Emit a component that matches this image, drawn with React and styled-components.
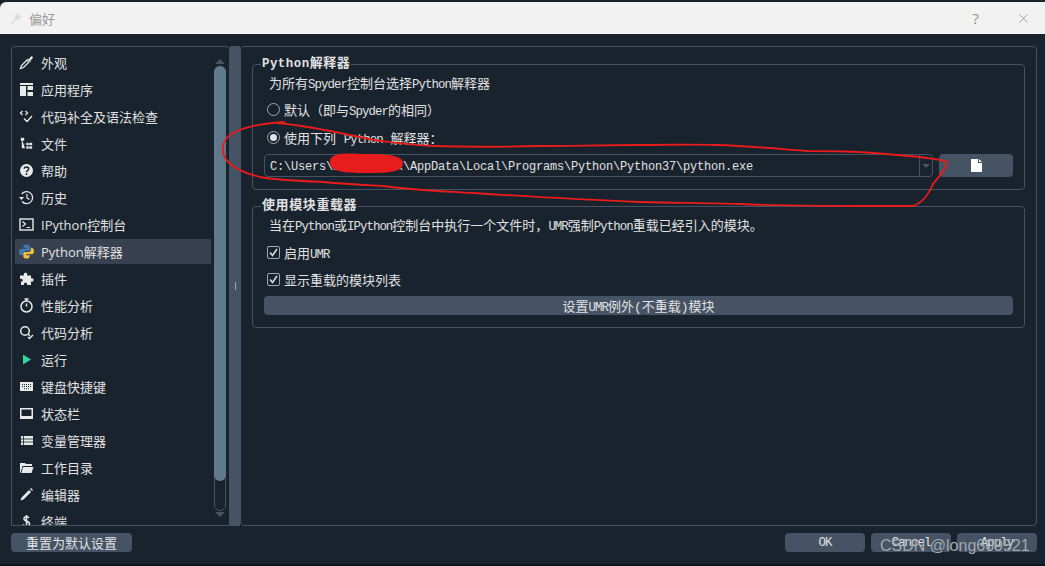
import React from "react";
import styled, { createGlobalStyle } from "styled-components";
import { X } from "lucide-react";

const Global = createGlobalStyle`
  html, body { margin: 0; padding: 0; background: #19232d; overflow: hidden; }
  * { box-sizing: border-box; }
`;

const SANS = `"Open Sans", "Noto Sans CJK SC", sans-serif`;
const MONO = `"Liberation Mono", "Noto Sans CJK SC", monospace`;

const Page = styled.div`
  position: relative;
  width: 1045px;
  height: 566px;
  overflow: hidden;
  background: #19232d;
  color: #e0e1e3;
  font-family: ${MONO};
  font-size: 13px;
  padding-top: 2px;
`;

const TitleBar = styled.div`
  height: 32px;
  background: #f2f2f2;
  border-top-left-radius: 6px;
  display: flex;
  align-items: center;
  padding: 0 14px 0 9px;
  color: #9a9a9a;
  font-family: ${SANS};
  font-size: 13px;
`;

const TitleText = styled.span`
  margin-left: 7px;
  flex: 1;
`;

const Help = styled.span`
  font-size: 15px;
  color: #8f8f8f;
  margin-right: 37px;
`;

const Main = styled.div`
  display: flex;
  height: 480px;
  margin: 12px 8px 0 11px;
`;

const ListBox = styled.div`
  position: relative;
  width: 219px;
  border: 1px solid #455364;
  border-radius: 4px 4px 0 0;
  overflow: hidden;
  padding: 2px 3px 0;
`;

const Item = styled.div`
  display: flex;
  align-items: center;
  height: 27px;
  margin-right: 15px;
  padding-left: 4px;
  gap: 7px;
  font-family: ${SANS};
  font-size: 13px;
  background: ${(p) =>
    p.$active ? "linear-gradient(transparent 1px, #37414f 1px, #37414f 26px, transparent 26px)" : "transparent"};
`;

const IconSlot = styled.span`
  width: 15px;
  height: 15px;
  display: flex;
  align-items: center;
  justify-content: center;
  flex: none;
`;

const ScrollBar = styled.div`
  position: absolute;
  top: 19px;
  right: 3px;
  width: 12px;
  height: 445px;
  border: 1px solid #455364;
  border-radius: 6px;
`;

const Thumb = styled.div`
  height: 415px;
  margin: -1px;
  background: #60798b;
  border-radius: 6px;
`;

const Arrow = styled.div`
  position: absolute;
  right: 4px;
  top: ${(p) => p.$top}px;
  width: 0;
  height: 0;
  border-left: 5px solid transparent;
  border-right: 5px solid transparent;
  ${(p) => (p.$up ? "border-bottom: 5px solid #455364;" : "border-top: 5px solid #455364;")}
`;

const Splitter = styled.div`
  width: 10px;
  background: #455364;
  display: flex;
  align-items: center;
  justify-content: center;
`;

const Grip = styled.div`
  width: 1px;
  height: 8px;
  background: #9da9b5;
`;

const Panel = styled.div`
  flex: 1;
  border: 1px solid #455364;
  border-radius: 4px;
  padding: 17px 11px 0;
`;

const Group = styled.div`
  position: relative;
  height: ${(p) => p.$h}px;
  margin-bottom: 16px;
  border: 1px solid #455364;
  border-radius: 4px;
  padding: 12px 11px 0;
`;

const Legend = styled.div`
  position: absolute;
  top: -9px;
  left: 8px;
  padding: 0 1px;
  background: #19232d;
  font-weight: bold;
  line-height: 15px;
  letter-spacing: 0.6px;
`;

const Line = styled.div`
  height: ${(p) => p.$h || 27}px;
  display: flex;
  align-items: center;
  gap: 4px;
  white-space: pre;
`;

const Note = styled.div`
  height: ${(p) => p.$h || 16}px;
  line-height: 16px;
  margin-left: 5px;
  white-space: pre;
`;

const Lat = styled.span`
  font-size: 12.4px;
  letter-spacing: -0.95px;
`;

const LegendLat = styled.span`
  font-size: 12.4px;
  letter-spacing: 0.5px;
`;

const Radio = styled.span`
  width: 13px;
  height: 13px;
  margin-left: 3px;
  border: 1px solid #9da9b5;
  border-radius: 50%;
  display: flex;
  align-items: center;
  justify-content: center;
  &::after {
    content: "";
    width: 7px;
    height: 7px;
    border-radius: 50%;
    background: ${(p) => (p.$on ? "#e0e1e3" : "transparent")};
  }
`;

const Check = styled.span`
  width: 13px;
  height: 13px;
  margin-left: 3px;
  border: 1px solid #9da9b5;
  border-radius: 2px;
  display: flex;
`;

const PathRow = styled.div`
  display: flex;
  gap: 6px;
  margin-top: 5px;
`;

const PathBox = styled.div`
  flex: 1;
  height: 23px;
  display: flex;
  align-items: center;
  justify-content: space-between;
  border: 1px solid #455364;
  border-radius: 4px;
  padding-left: 5px;
`;

const PathText = styled.span`
  font-size: 12px;
  letter-spacing: -0.2px;
  padding-top: 3px;
`;

const ComboDrop = styled.span`
  width: 13px;
  height: 100%;
  border-left: 1px solid #455364;
  display: flex;
  align-items: center;
  justify-content: center;
  &::after {
    content: "";
    border-left: 4px solid transparent;
    border-right: 4px solid transparent;
    border-top: 4px solid #455364;
  }
`;

const Button = styled.div`
  width: ${(p) => p.$w || "100%"};
  height: ${(p) => p.$h || 19}px;
  margin-top: ${(p) => p.$mt || 0}px;
  background: #455364;
  border-radius: 4px;
  display: flex;
  align-items: center;
  justify-content: center;
  white-space: pre;
  flex: none;
`;

const Footer = styled.div`
  display: flex;
  align-items: center;
  gap: 6px;
  margin: 7px 8px 0 11px;
`;

const Spacer = styled.div`
  flex: 1;
`;

const Watermark = styled.div`
  position: absolute;
  left: 880px;
  top: 537px;
  font-family: "Liberation Sans", sans-serif;
  font-size: 16px;
  line-height: 18px;
  color: #a3a9ae;
`;

const Strip = styled.div`
  position: absolute;
  left: 0;
  right: 0;
  bottom: 0;
  height: 2px;
  background: #101418;
`;

const Ink = styled.svg`
  position: absolute;
  left: 0;
  top: 0;
  pointer-events: none;
`;

const W = "#e8eaec";

const Svg = ({ children }) => (
  <svg width="15" height="15" viewBox="0 0 15 15">{children}</svg>
);

const navIcons = [
  <Svg><path d="M1.500 13.500 L2.500 10.500 L8 5 L10 7 L4.500 12.500 Z" fill="none" stroke={W} strokeWidth="1.300" /><path d="M8 3.500 L10 4 L12 1.500 C13 1 14.500 2 13.500 3.500 L11.500 5.500 L12 7.500 Z" fill={W} /></Svg>,
  <Svg><path d="M1 1 H14 V3 H1 Z M1 4 H7 V14 H1 Z M8.500 4 H14 V8 H8.500 Z M8.500 10 H14 V14 H8.500 Z" fill={W} /></Svg>,
  <Svg><path d="M3.500 2 L1.500 4 L3.500 6 M6.500 2 L8.500 4 L6.500 6 M5 9.500 L8 12.500 L13 7" fill="none" stroke={W} strokeWidth="1.300" /></Svg>,
  <Svg><path d="M2 2 H5 V4.500 H2 Z M3 4 V12 H6 M3 8 H6 M7.500 7 H9.500 V9 H7.500 Z M10.500 7 H13 V9 H10.500 Z M7.500 10.500 H9.500 V12.500 H7.500 Z M10.500 10.500 H13 V12.500 H10.500 Z" fill={W} stroke={W} strokeWidth="0.400" /></Svg>,
  <Svg><circle cx="7.500" cy="7.500" r="6.500" fill={W} /><path d="M5.300 5.800 C5.300 3.500 9.700 3.500 9.700 5.800 C9.700 7.400 7.500 7.200 7.500 9.200 M7.500 10.300 V12" fill="none" stroke="#19232d" strokeWidth="1.500" /></Svg>,
  <Svg><path d="M2.800 4 A6 6 0 1 1 3 11.500" fill="none" stroke={W} strokeWidth="1.300" /><path d="M0 7 L5 7 L2.500 10 Z" fill={W} /><path d="M8 4 V8 L10.500 9.500" fill="none" stroke={W} strokeWidth="1.200" /></Svg>,
  <Svg><rect x="1" y="2" width="13" height="11" fill="none" stroke={W} strokeWidth="1.400" /><path d="M3.500 4.500 L6.500 7 L3.500 9.500 M7.500 10.500 H11" fill="none" stroke={W} strokeWidth="1.200" /></Svg>,
  <Svg><path d="M7.500 0.500 C4.300 0.500 4.300 2 4.300 3.800 H7.800 V4.800 H2.500 C0.500 4.800 0 6.300 0 8 C0 10 1 11.300 2.800 11.300 H4 V9.300 C4 8 5 7 6.300 7 H9.500 C10.500 7 11 6.300 11 5.500 V2.800 C11 1.300 9.500 0.500 7.500 0.500 Z" fill="#3d7bb0" /><path d="M7.500 14.500 C10.700 14.500 10.700 13 10.700 11.200 H7.200 V10.200 H12.500 C14.500 10.200 15 8.700 15 7 C15 5 14 3.700 12.200 3.700 H11.800 V5.700 C11.800 7 10.800 8 9.500 8 H5.800 C4.800 8 4.300 8.700 4.300 9.500 V12.200 C4.300 13.700 5.500 14.500 7.500 14.500 Z" fill="#f0c040" /></Svg>,
  <Svg><path d="M1 4.500 H5 C3.500 1 9.500 0.500 8 4.500 H12 V7.500 C15.500 6.500 15.500 11.500 12 10.500 V14 H8 C9 11 4 11 5 14 H2 V10.500 C4.500 11 4.500 7 1 8 Z" fill={W} /></Svg>,
  <Svg><circle cx="7.500" cy="8.500" r="5.500" fill="none" stroke={W} strokeWidth="1.500" /><path d="M5.500 1 H9.500 M7.500 1 V3 M7.500 5.500 V8.500" fill="none" stroke={W} strokeWidth="1.400" /></Svg>,
  <Svg><circle cx="6" cy="6" r="4.300" fill="none" stroke={W} strokeWidth="1.500" /><path d="M9 9 L11 11 M9 12 L10.500 13.500 L14 10" fill="none" stroke={W} strokeWidth="1.300" /></Svg>,
  <Svg><path d="M4 2.500 L12 7.500 L4 12.500 Z" fill="#2fd6a0" /></Svg>,
  <Svg><path d="M1 3 H14 V12 H1 Z" fill={W} /><path d="M3 5.500 H12 M3 7.500 H12 M5 9.700 H10" stroke="#19232d" strokeWidth="1" strokeDasharray="1 1" /></Svg>,
  <Svg><path d="M1 2 H14 V13 H1 Z" fill={W} /><rect x="2.500" y="3.500" width="10" height="6.500" fill="#19232d" /></Svg>,
  <Svg><path d="M2 3 H14 V12 H2 Z" fill={W} /><path d="M4.500 3 V12 M2 6 H14 M2 9 H14" stroke="#19232d" strokeWidth="0.800" /></Svg>,
  <Svg><path d="M1 3 H6 L7 4 H13 V6 H3.500 L1.500 13 H1 Z" fill={W} /><path d="M4 7 H14.500 L12.500 13 H2.500 Z" fill={W} /></Svg>,
  <Svg><path d="M1.500 13.500 L2.500 10.500 L10 3 L12 5 L4.500 12.500 Z M11 2 L12 1 L14 3 L13 4 Z" fill={W} /></Svg>,
  <Svg><path d="M10 4 C9 2 4.500 2.500 5 5 C5.500 7.500 10.500 6.500 10.500 10 C10.500 12.500 5 12.500 4 10.500 M7.500 1 V14" fill="none" stroke={W} strokeWidth="1.500" /></Svg>,
];

const labels = [
  "外观", "应用程序", "代码补全及语法检查", "文件", "帮助", "历史", "IPython控制台",
  "Python解释器", "插件", "性能分析", "代码分析", "运行", "键盘快捷键", "状态栏",
  "变量管理器", "工作目录", "编辑器", "终端",
];

const Tick = () => (
  <svg width="11" height="11" viewBox="0 0 11 11">
    <path d="M2 5.500 L4.500 8.500 L9 2" fill="none" stroke="#e0e1e3" strokeWidth="1.500" />
  </svg>
);

export default function App() {
  return (
    <Page>
      <Global />
      <TitleBar>
        <svg width="13" height="13" viewBox="0 0 13 13">
          <path d="M1 12 L6 7 C5 4 7 1 11 1 L9 3.500 L10 4.500 L12.500 3 C12.500 6 10 8.500 7 7.500 L2.500 13 Z" fill="#dcdcdc" />
        </svg>
        <TitleText>偏好</TitleText>
        <Help>?</Help>
        <X size={15} color="#8f8f8f" strokeWidth={1.3} />
      </TitleBar>
      <Main>
        <ListBox>
          {labels.map((l, i) => (
            <Item key={l} $active={i === 7}>
              <IconSlot>{navIcons[i]}</IconSlot>
              {l}
            </Item>
          ))}
          <Arrow $up $top={12} />
          <ScrollBar><Thumb /></ScrollBar>
          <Arrow $top={465} />
        </ListBox>
        <Splitter><Grip /></Splitter>
        <Panel>
          <Group $h={126}>
            <Legend><LegendLat>Python</LegendLat>解释器</Legend>
            <Note>为所有<Lat>Spyder</Lat>控制台选择<Lat>Python</Lat>解释器</Note>
            <Line $h={33}><Radio /><span>默认（即与<Lat>Spyder</Lat>的相同）</span></Line>
            <Line $h={23}><Radio $on /><span>使用下列 <Lat>Python</Lat> 解释器：</span></Line>
            <PathRow>
              <PathBox>
                <PathText>{"C:\\Users\\xxxxxxxxxx\\AppData\\Local\\Programs\\Python\\Python37\\python.exe"}</PathText>
                <ComboDrop />
              </PathBox>
              <Button $w="74px" $h={23}>
                <svg width="11" height="13" viewBox="0 0 11 13">
                  <path d="M0 0 H7 V4 H11 V13 H0 Z M8 0 L11 3 H8 Z" fill="#fff" />
                </svg>
              </Button>
            </PathRow>
          </Group>
          <Group $h={122}>
            <Legend>使用模块重载器</Legend>
            <Note $h={20}>当在<Lat>Python</Lat>或<Lat>IPython</Lat>控制台中执行一个文件时，<Lat>UMR</Lat>强制<Lat>Python</Lat>重载已经引入的模块。</Note>
            <Line><Check><Tick /></Check><span>启用<Lat>UMR</Lat></span></Line>
            <Line><Check><Tick /></Check><span>显示重载的模块列表</span></Line>
            <Button $mt={3}><span>设置<Lat>UMR</Lat>例外(不重载)模块</span></Button>
          </Group>
        </Panel>
      </Main>
      <Footer>
        <Button $w="121px">重置为默认设置</Button>
        <Spacer />
        <Button $w="80px"><Lat>OK</Lat></Button>
        <Button $w="80px"><Lat>Cancel</Lat></Button>
        <Button $w="80px"><Lat>Apply</Lat></Button>
      </Footer>
      <Strip />
      <Watermark>CSDN @long609521</Watermark>
      <Ink width="1045" height="566" viewBox="0 0 1045 566">
        <path d="M330 162 C330 152 345 153 365 154 C385 154 403 155 403 163 C403 173 385 173 365 173 C345 173 330 172 330 162 Z" fill="#e81c1c" />
        <path d="M285 122 C265 123 245 127 233 133 C224 138 222 146 223 152 C225 165 240 172 260 177 C275 180 300 181 323 182 C345 184 365 185 383 186 C410 190 440 191 473 193 C520 196 590 200 640 202 C680 203 710 203 740 204 C780 206 820 206 913 206 C922 203 928 196 933 184 C937 178 945 172 947 162 C940 158 900 155 873 153 C850 151 830 151 807 151 C780 149 750 146 717 145 C690 144 670 145 640 145 C600 145 570 146 540 146 C500 147 465 147 433 146 C410 145 390 142 373 140 C360 137 350 135 340 133 C320 129 300 125 277 123" fill="none" stroke="#e81c1c" strokeWidth="1.800" />
      </Ink>
    </Page>
  );
}
